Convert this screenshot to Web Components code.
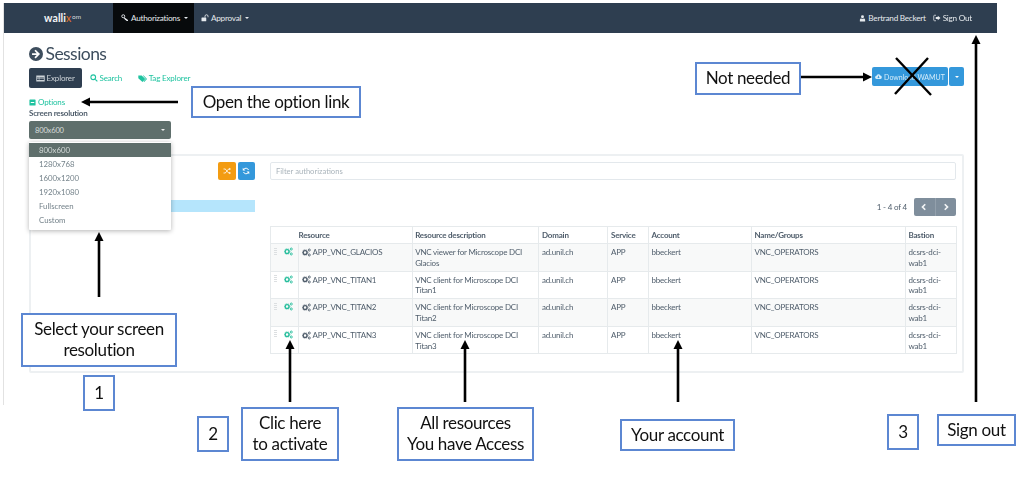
<!DOCTYPE html>
<html lang="en">
<head>
<meta charset="utf-8">
<title>Sessions</title>
<style>
  html, body { margin: 0; background: #fff; }
  body { width: 1024px; height: 478px; overflow: hidden; position: relative; font-family: Lato, "Liberation Sans", sans-serif; }
</style>
</head>
<body>
<app-shot></app-shot>
<note-layer></note-layer>
<script>
const ICONS = {
  key: '<circle cx="4.5" cy="4.5" r="3" fill="none" stroke="currentColor" stroke-width="1.8"/><path d="M6.5 6.5 L14 12 V14 H11 L10 12.5 L8.5 12 L5.5 8z"/>',
  unlock: '<rect x="1" y="7" width="9.5" height="7.5" rx="1"/><path d="M8 7 V4.5 a3 3 0 0 1 6 0 V6.5" fill="none" stroke="currentColor" stroke-width="1.7"/>',
  user: '<circle cx="8" cy="4.2" r="3.4"/><path d="M2 15 V11 C2 8.6 4 7.8 5 7.8 L8 9.2 L11 7.8 C12 7.8 14 8.6 14 11 V15z"/>',
  signout: '<path d="M6 2.5 H3 a1.5 1.5 0 0 0 -1.5 1.5 V12 a1.5 1.5 0 0 0 1.5 1.5 H6" fill="none" stroke="currentColor" stroke-width="1.5"/><path d="M9.5 3.5 L15 8 L9.5 12.5 V10 H5.5 V6 H9.5z"/>',
  circleright: '<path fill-rule="evenodd" d="M8 0 a8 8 0 1 0 0 16 a8 8 0 1 0 0 -16z M7.6 3 L12.6 8 L7.6 13 L6.2 11.6 L8.8 9 H3.5 V7 H8.8 L6.2 4.4z"/>',
  table: '<path fill-rule="evenodd" d="M0.5 2.5 H15.5 V13.5 H0.5z M2 6 V7.8 H5 V6z M6 6 V7.8 H14 V6z M2 8.8 V10.6 H5 V8.8z M6 8.8 V10.6 H14 V8.8z"/>',
  search: '<circle cx="6.5" cy="6.5" r="4.7" fill="none" stroke="currentColor" stroke-width="2.2"/><path d="M9.8 11.4 L11.4 9.8 L15.5 13.9 L13.9 15.5z"/>',
  tags: '<path d="M0.5 2.5 H6.5 L13 9 L8 14 L0.5 7.5z"/><path d="M8.5 2.5 H10 L16 9 L11 14 L10 13 L14 9z"/>',
  minus: '<path fill-rule="evenodd" d="M2.5 1 H13.5 a1.5 1.5 0 0 1 1.5 1.5 V13.5 a1.5 1.5 0 0 1 -1.5 1.5 H2.5 a1.5 1.5 0 0 1 -1.5 -1.5 V2.5 a1.5 1.5 0 0 1 1.5 -1.5z M4 6.7 V9.3 H12 V6.7z"/>',
  cloud: '<path fill-rule="evenodd" d="M4 13.5 a3.5 3.5 0 0 1 -0.6 -7 a4.6 4.6 0 0 1 8.8 -0.9 a4 4 0 0 1 0 7.9z M7 6 V9 H5 L8 12 L11 9 H9 V6z"/>',
  random: '<path d="M1 4 H4 C7 4 8.5 12 12 12 H13" fill="none" stroke="currentColor" stroke-width="1.6"/><path d="M1 12 H4 C7 12 8.5 4 12 4 H13" fill="none" stroke="currentColor" stroke-width="1.6"/><path d="M12.5 1.5 L16 4 L12.5 6.5z M12.5 9.5 L16 12 L12.5 14.5z"/>',
  refresh: '<path d="M13 6 A5.5 5.5 0 0 0 3.2 5" fill="none" stroke="currentColor" stroke-width="2"/><path d="M3 10 A5.5 5.5 0 0 0 12.8 11" fill="none" stroke="currentColor" stroke-width="2"/><path d="M1.5 1.5 V7 H7z M14.5 14.5 V9 H9z"/>',
  cogs: '<circle cx="5.5" cy="8" r="3.4" fill="none" stroke="currentColor" stroke-width="2.4"/><circle cx="5.5" cy="8" r="5" fill="none" stroke="currentColor" stroke-width="1.4" stroke-dasharray="1.8 1.8"/><circle cx="13" cy="3.6" r="1.8" fill="none" stroke="currentColor" stroke-width="1.6"/><circle cx="13" cy="12.4" r="1.8" fill="none" stroke="currentColor" stroke-width="1.6"/>',
  left: '<path d="M10.5 2.5 L5 8 L10.5 13.5" fill="none" stroke="currentColor" stroke-width="3.4"/>',
  right: '<path d="M5.5 2.5 L11 8 L5.5 13.5" fill="none" stroke="currentColor" stroke-width="3.4"/>'
};

class FaIcon extends HTMLElement {
  connectedCallback() {
    const size = this.getAttribute('size') || '8';
    this.attachShadow({ mode: 'open' }).innerHTML = `
      <style>
        :host { display: inline-flex; flex: none; width: ${size}px; height: ${size}px; }
        svg { width: 100%; height: 100%; fill: currentColor; display: block; }
      </style>
      <svg viewBox="0 0 16 16">${ICONS[this.getAttribute('name')] || ''}</svg>`;
  }
}
customElements.define('fa-icon', FaIcon);

class AppNavbar extends HTMLElement {
  connectedCallback() {
    this.attachShadow({ mode: 'open' }).innerHTML = `
      <style>
        :host { display: flex; height: 30px; background: #2e3e50; color: #e6eaed; font: 8.2px Lato, sans-serif; letter-spacing: -.25px; align-items: stretch; }
        .logo { width: 109px; padding-left: 40px; box-sizing: border-box; display: flex; align-items: center; color: #f4f5f6; font: 700 10.5px Lato, sans-serif; letter-spacing: .1px; }
        .logo b { color: #e8742c; font-weight: 400; }
        .logo span { font: 400 6.5px Lato, sans-serif; color: #d5dade; margin: -4px 0 0 .5px; }
        a { display: flex; align-items: center; gap: 2px; padding: 0 7px; }
        a.on { background: #070a0c; width: 81px; box-sizing: border-box; padding-left: 8px; }
        a.sp { padding-left: 7px; }
        i { width: 0; height: 0; margin-left: 2px; border: 2px solid transparent; border-top-color: currentColor; border-bottom: 0; }
        .fill { flex: 1; }
      </style>
      <div class="logo">walli<b>x</b><span>om</span></div>
      <a class="on"><fa-icon name="key" size="8"></fa-icon>Authorizations <i></i></a>
      <a class="sp"><fa-icon name="unlock" size="8"></fa-icon>Approval <i></i></a>
      <div class="fill"></div>
      <a style="padding:0 7px 0 0"><fa-icon name="user" size="7"></fa-icon>Bertrand Beckert</a>
      <a style="padding:0 25px 0 0"><fa-icon name="signout" size="8"></fa-icon>Sign Out</a>`;
  }
}
customElements.define('app-navbar', AppNavbar);

class ResSelect extends HTMLElement {
  connectedCallback() {
    const items = ['800x600', '1280x768', '1600x1200', '1920x1080', 'Fullscreen', 'Custom'];
    this.attachShadow({ mode: 'open' }).innerHTML = `
      <style>
        :host { display: block; position: relative; width: 142px; height: 18px; font: 7.8px Lato, sans-serif; }
        .btn { height: 18px; background: #5f6f6c; border-radius: 2px; color: #d5dbd9; display: flex; align-items: center; justify-content: space-between; padding: 0 6px; box-sizing: border-box; font-size: 7.6px; letter-spacing: -.2px; }
        .btn i { border: 2px solid transparent; border-top-color: #eee; border-bottom: 0; }
        ul { position: absolute; z-index: 3; top: 21px; left: 0; width: 142px; margin: 0; padding: 1px 0 3px; list-style: none; background: #fff; box-sizing: border-box; height: 88px; box-shadow: 0 1px 5px rgba(0,0,0,.3); border-radius: 1px; color: #74828a; }
        li { height: 14px; line-height: 14px; padding-left: 10px; }
        li.on { background: #5f6f6c; color: #d5dbd9; }
      </style>
      <div class="btn"><span>800x600</span><i></i></div>
      <ul>${items.map((t, n) => `<li class="${n ? '' : 'on'}">${t}</li>`).join('')}</ul>`;
  }
}
customElements.define('res-select', ResSelect);

class AuthTable extends HTMLElement {
  connectedCallback() {
    const rows = [
      ['APP_VNC_GLACIOS', 'VNC viewer for Microscope DCI Glacios'],
      ['APP_VNC_TITAN1', 'VNC client for Microscope DCI Titan1'],
      ['APP_VNC_TITAN2', 'VNC client for Microscope DCI Titan2'],
      ['APP_VNC_TITAN3', 'VNC client for Microscope DCI Titan3']
    ];
    const widths = [28, 113.7, 126.8, 69, 40.5, 103, 154, 51];
    this.attachShadow({ mode: 'open' }).innerHTML = `
      <style>
        :host { display: block; font: 8px/10.8px Lato, sans-serif; letter-spacing: -.2px; color: #4f5d6b; }
        table { border-collapse: collapse; table-layout: fixed; width: 686px; }
        th, td { border: 1px solid #e6eaec; padding: 3px 2px 2px 2.5px; text-align: left; vertical-align: top; overflow: hidden; }
        th { font-weight: 700; height: 11px; }
        th.h0 { border-right: 0; }
        th.h1 { border-left: 0; padding-left: 0; }
        tbody tr { height: 27.5px; }
        tbody tr:nth-child(odd) td { background: #f8f9f9; }
        td.act { padding: 3px 0 0 3px; }
        .act div { display: flex; gap: 6.5px; align-items: center; color: #26bd9c; }
        .grip { width: 3px; height: 8px; background: repeating-linear-gradient(#dcdfe1 0 1px, transparent 1px 2px); }
        .res { white-space: nowrap; display: flex; gap: 2px; align-items: center; }
      </style>
      <table>
        <colgroup>${widths.map(w => `<col style="width:${w}px">`).join('')}</colgroup>
        <thead><tr>
          <th class="h0"></th><th class="h1">Resource</th><th>Resource description</th><th>Domain</th>
          <th>Service</th><th>Account</th><th>Name/Groups</th><th>Bastion</th>
        </tr></thead>
        <tbody>${rows.map(r => `<tr>
          <td class="act"><div><span class="grip"></span><fa-icon name="cogs" size="9"></fa-icon></div></td>
          <td><div class="res"><fa-icon name="cogs" size="9" style="color:#4f5d6b"></fa-icon>${r[0]}</div></td>
          <td>${r[1]}</td><td>ad.unil.ch</td><td>APP</td><td>bbeckert</td><td>VNC_OPERATORS</td><td>dcsrs-dci-wab1</td>
        </tr>`).join('')}</tbody>
      </table>`;
  }
}
customElements.define('auth-table', AuthTable);

class SessionPanel extends HTMLElement {
  connectedCallback() {
    this.attachShadow({ mode: 'open' }).innerHTML = `
      <style>
        :host { display: grid; grid-template-columns: 218px 686px; column-gap: 15px; width: 935px; height: 219px; box-sizing: border-box; padding: 6px; border: 2px solid #edf0f2; border-radius: 2px; font: 8px Lato, sans-serif; letter-spacing: -.2px; color: #4f5d6b; }
        .tools { display: flex; justify-content: flex-end; gap: 2px; height: 18px; }
        .tools span { width: 17.5px; height: 18px; border-radius: 2px; color: #fff; display: flex; align-items: center; justify-content: center; }
        .bar { margin-top: 20px; height: 12px; background: #b5e5fc; }
        .filter { height: 18px; box-sizing: border-box; border: 1px solid #e3e8ec; border-radius: 2px; padding: 0 5px; color: #aab4bb; font-size: 7.6px; letter-spacing: 0; line-height: 16px; }
        .pager { display: flex; justify-content: flex-end; align-items: center; height: 18px; margin: 18px 0 10px; gap: 7px; }
        .nav { display: flex; width: 42px; height: 18px; border-radius: 2px; background: #7f8e9c; color: #f2f4f6; overflow: hidden; }
        .nav span { flex: 1; display: flex; align-items: center; justify-content: center; }
        .nav span + span { border-left: 1px solid #93a0ac; }
      </style>
      <div>
        <div class="tools">
          <span style="background:#f39c12"><fa-icon name="random" size="8"></fa-icon></span>
          <span style="background:#3498db"><fa-icon name="refresh" size="8"></fa-icon></span>
        </div>
        <div class="bar"></div>
      </div>
      <div>
        <div class="filter">Filter authorizations</div>
        <div class="pager"><span>1 - 4 of 4</span>
          <div class="nav"><span><fa-icon name="left" size="8"></fa-icon></span><span><fa-icon name="right" size="8"></fa-icon></span></div>
        </div>
        <auth-table></auth-table>
      </div>`;
  }
}
customElements.define('session-panel', SessionPanel);

class AppShot extends HTMLElement {
  connectedCallback() {
    this.attachShadow({ mode: 'open' }).innerHTML = `
      <style>
        :host { display: block; width: 993px; height: 402px; margin: 3px 0 0 4px; position: relative; filter: blur(.4px); font: 8px Lato, sans-serif; color: #2e3e50; box-shadow: -1px 0 0 #e2e2e2; clip-path: inset(0 0 0 -2px); }
        .page { padding: 11px 0 0 25px; }
        h1 { margin: 0; display: flex; align-items: center; gap: 2.5px; font: 400 17.5px/20px Lato, sans-serif; letter-spacing: -.55px; color: #3d4d5d; height: 20px; }
        .tabs { display: flex; align-items: flex-start; width: 935px; margin-top: 4px; height: 20px; }
        .tab { display: flex; align-items: center; gap: 1.5px; height: 20px; padding: 0 8px; color: #1fc3a0; font-size: 8px; letter-spacing: -.15px; }
        .tab.on { background: #2e3e50; color: #cdd3d8; border-radius: 2px; width: 53px; padding: 0 7px; box-sizing: border-box; }
        .tab.s { padding-right: 8px; }
        .fill { flex: 1; }
        .dl { display: flex; gap: 1px; margin-top: -1px; color: #d4ecfa; font-size: 7px; }
        .dl span { background: #3498db; height: 19px; border-radius: 2px; display: flex; align-items: center; justify-content: center; gap: 2px; }
        .dl i { border: 2px solid transparent; border-top-color: #fff; border-bottom: 0; }
        .opts { display: flex; align-items: center; gap: 2px; margin-top: 9px; height: 10px; color: #1fc3a0; font-size: 8px; letter-spacing: -.15px; }
        .lab { font-weight: 700; font-size: 8px; letter-spacing: -.2px; height: 14px; line-height: 12px; color: #4f5d6b; }
        session-panel { margin-top: 15px; }
      </style>
      <app-navbar></app-navbar>
      <div class="page">
        <h1><fa-icon name="circleright" size="14"></fa-icon>Sessions</h1>
        <div class="tabs">
          <div class="tab on"><fa-icon name="table" size="9"></fa-icon>Explorer</div>
          <div class="tab s"><fa-icon name="search" size="8"></fa-icon>Search</div>
          <div class="tab"><fa-icon name="tags" size="9"></fa-icon>Tag Explorer</div>
          <div class="fill"></div>
          <div class="dl">
            <span style="width:76px"><fa-icon name="cloud" size="7"></fa-icon>Download WAMUT</span>
            <span style="width:15px"><i></i></span>
          </div>
        </div>
        <div class="opts"><fa-icon name="minus" size="7"></fa-icon>Options</div>
        <div class="lab">Screen resolution</div>
        <res-select></res-select>
        <session-panel></session-panel>
      </div>`;
  }
}
customElements.define('app-shot', AppShot);

class CallOut extends HTMLElement {
  connectedCallback() {
    const [x, y, w, h] = this.getAttribute('box').split(',');
    this.attachShadow({ mode: 'open' }).innerHTML = `
      <style>
        :host { position: absolute; left: ${x}px; top: ${y}px; width: ${w}px; height: ${h}px; box-sizing: border-box; border: 2px solid #5c87d2; background: #fff; padding-bottom: 2px; display: flex; align-items: center; justify-content: center; text-align: center; font: 17px/21px Lato, sans-serif; letter-spacing: -.35px; color: #111; white-space: pre-line; filter: blur(.25px); }
      </style>
      <slot></slot>`;
  }
}
customElements.define('call-out', CallOut);

class NoteLayer extends HTMLElement {
  connectedCallback() {
    // [x1, y1, x2, y2], the head sits on the second point
    const arrows = [
      [178, 102, 81, 102], [801, 77, 872, 77], [976, 402, 976, 35], [99, 297, 99, 232],
      [290, 402, 290, 340], [465, 402, 465, 340], [678, 402, 678, 340]
    ];
    const draw = ([x1, y1, x2, y2]) => {
      const len = Math.hypot(x2 - x1, y2 - y1), ux = (x2 - x1) / len, uy = (y2 - y1) / len;
      const bx = x2 - ux * 9, by = y2 - uy * 9, px = -uy * 4.5, py = ux * 4.5;
      return `<line x1="${x1}" y1="${y1}" x2="${bx}" y2="${by}" stroke="#000" stroke-width="2.6"/>
        <polygon points="${x2},${y2} ${bx + px},${by + py} ${bx - px},${by - py}" fill="#000"/>`;
    };
    this.attachShadow({ mode: 'open' }).innerHTML = `
      <style>
        :host { position: absolute; inset: 0; display: block; }
        svg { position: absolute; left: 0; top: 0; filter: blur(.3px); }
      </style>
      <svg width="1024" height="478">
        ${arrows.map(draw).join('')}
        <line x1="896" y1="58" x2="931" y2="95" stroke="#000" stroke-width="2.4"/>
        <line x1="895" y1="94" x2="928" y2="58" stroke="#000" stroke-width="2.4"/>
      </svg>
      <call-out box="191,86,170,32">Open the option link</call-out>
      <call-out box="695,62,106,33">Not needed</call-out>
      <call-out box="21,313,156,54">Select your screen
resolution</call-out>
      <call-out box="83,375,32,36">1</call-out>
      <call-out box="197,416,32,36">2</call-out>
      <call-out box="241,407,98,54">Clic here
to activate</call-out>
      <call-out box="397,407,137,54">All resources
You have Access</call-out>
      <call-out box="620,419,115,32">Your account</call-out>
      <call-out box="887,414,32,36">3</call-out>
      <call-out box="937,414,79,32">Sign out</call-out>`;
  }
}
customElements.define('note-layer', NoteLayer);
</script>
</body>
</html>
